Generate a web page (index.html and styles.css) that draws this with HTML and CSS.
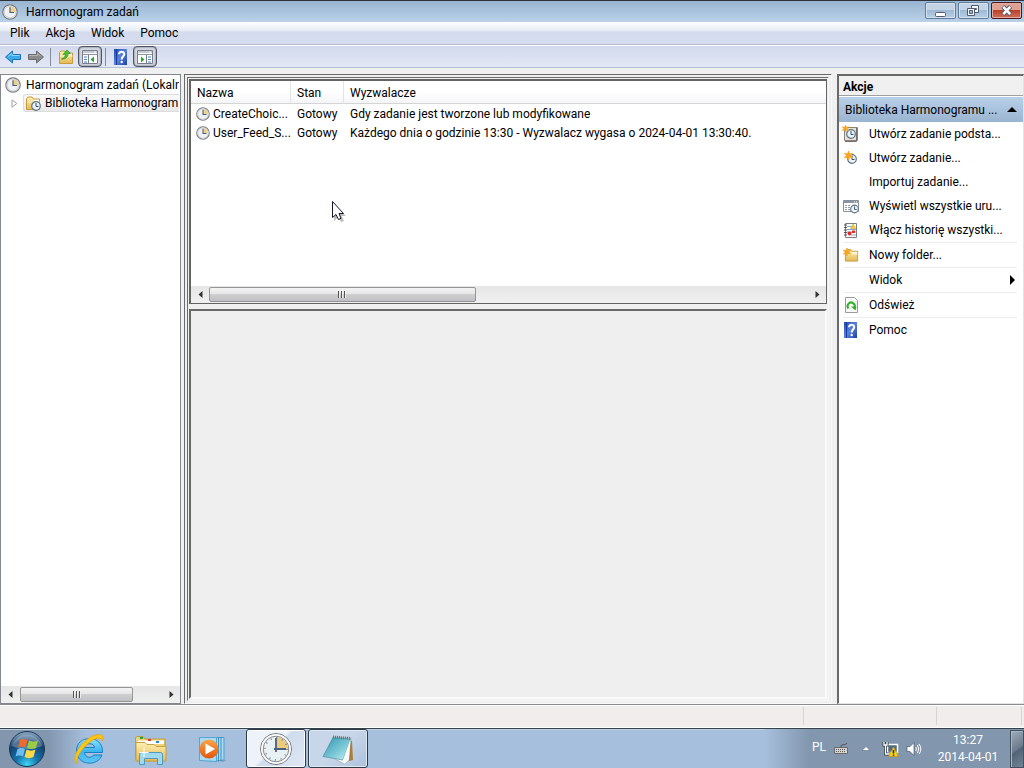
FILE: index.html
```html
<!DOCTYPE html>
<html lang="pl">
<head>
<meta charset="utf-8">
<title>Harmonogram zadań</title>
<link rel="stylesheet" href="styles.css">
</head>
<body>
<svg class="defs" aria-hidden="true">
  <defs>
    <linearGradient id="gold" x1="0" y1="0" x2="0" y2="1"><stop offset="0" stop-color="#fdf0b4"/><stop offset="1" stop-color="#e3b955"/></linearGradient>
    <linearGradient id="help-blue" x1="0" y1="0" x2="1" y2="1"><stop offset="0" stop-color="#1f49b5"/><stop offset=".5" stop-color="#5b83dc"/><stop offset="1" stop-color="#1b3fa6"/></linearGradient>
    <radialGradient id="orb" cx=".5" cy=".95" r=".9"><stop offset="0" stop-color="#3fd8f6"/><stop offset=".35" stop-color="#1576ae"/><stop offset=".75" stop-color="#16406c"/><stop offset="1" stop-color="#7d9dbb"/></radialGradient>
    <linearGradient id="ie" x1="0" y1="0" x2="0" y2="1"><stop offset="0" stop-color="#8fe3fb"/><stop offset=".5" stop-color="#3fb4ee"/><stop offset="1" stop-color="#5cc5f5"/></linearGradient>
    <linearGradient id="orange" x1="0" y1="0" x2="0" y2="1"><stop offset="0" stop-color="#fba54a"/><stop offset="1" stop-color="#e4560c"/></linearGradient>
    <linearGradient id="teal" x1="0" y1="0" x2="1" y2="1"><stop offset="0" stop-color="#2f93ae"/><stop offset=".6" stop-color="#7fcbd9"/><stop offset="1" stop-color="#d5f1f4"/></linearGradient>
    <symbol id="clock" viewBox="0 0 16 16">
      <circle cx="8" cy="8" r="7.2" fill="#eef2f6" stroke="#77797d" stroke-width="1.2"/>
      <circle cx="8" cy="8" r="5.9" fill="none" stroke="#cfcfcf" stroke-width="1"/>
      <path d="M8 8V2.6A5.4 5.4 0 0 1 13.4 8Z" fill="#f0cf86"/>
      <path d="M8 3.2V8.5H12" fill="none" stroke="#4a5d80" stroke-width="1.2"/>
    </symbol>
    <symbol id="mini-clock" viewBox="0 0 10 10">
      <circle cx="5" cy="5" r="4.300" fill="#eaf3fa" stroke="#5f7482" stroke-width="1.200"/>
      <path d="M5 2V5.500H7.500" fill="none" stroke="#33506e"/>
    </symbol>
    <symbol id="folder" viewBox="0 0 16 16">
      <path d="M1.500 14.500V3.500L3 2H7L8.500 4H14.500V14.500Z" fill="url(#gold)" stroke="#c79a3c"/>
      <path d="M8.500 5.500H14" stroke="#fff" stroke-width="1.500"/>
      <path d="M2 7H14.500" stroke="#fff3c4"/>
    </symbol>
    <symbol id="help" viewBox="0 0 16 16">
      <path d="M1 0H14V16H1Z" fill="url(#help-blue)"/>
      <path d="M3.500 0V16" stroke="#173a96"/>
      <path d="M6 5.300C6 1.900 11.500 1.900 11.200 5.400C11 7.500 8.700 7.700 8.700 10.400" fill="none" stroke="#fff" stroke-width="2"/>
      <circle cx="8.700" cy="13" r="1.200" fill="#fff"/>
    </symbol>
    <symbol id="star" viewBox="0 0 10 10"><path d="M5 0L6.200 3.300L9.700 2.500L7.300 5L9.700 7.800L6.200 6.900L5 10L3.800 6.900L.3 7.800L2.700 5L.3 2.500L3.800 3.300Z" fill="#f5a51f" stroke="#f5a51f" stroke-width=".8"/></symbol>
  </defs>
</svg>

<header class="titlebar">
  <svg class="icon16"><use href="#clock"/></svg>
  <h1>Harmonogram zadań</h1>
  <div class="window-buttons">
    <button type="button" aria-label="Minimalizuj"><svg width="30" height="17"><rect x="9.500" y="10.500" width="10" height="4" rx="1" fill="#fff" stroke="#535b70"/></svg></button>
    <button type="button" aria-label="Przywróć w dół"><svg width="30" height="17" fill="#f3f6fa" stroke="#535b70"><path d="M12.500 3.500H19.500V10.500H12.500Z"/><path d="M15.500 6.500H17.500V7.500H15.500Z"/><path d="M8.500 6.500H15.500V13.500H8.500Z"/><path d="M10.500 8.500H13.500V11.500H10.500Z" fill="#9eb7d2"/></svg></button>
    <button type="button" class="close" aria-label="Zamknij"><svg width="30" height="17"><path d="M11 4.500L18.500 12.500M18.500 4.500L11 12.500" stroke="#535b70" stroke-width="4.600"/><path d="M11.300 4.800L18.200 12.200M18.200 4.800L11.300 12.200" stroke="#fff" stroke-width="2.600"/></svg></button>
  </div>
</header>

<nav class="menubar">
  <button type="button">Plik</button>
  <button type="button">Akcja</button>
  <button type="button">Widok</button>
  <button type="button">Pomoc</button>
</nav>

<div class="toolbar">
  <button type="button" aria-label="Wstecz"><svg class="icon16"><path d="M.5 8L7.500 2V5.500H15.500V10.500H7.500V14Z" fill="#39a9ea" stroke="#1873b6"/><path d="M3 7.500L7 4.500V6.500H14.500" fill="none" stroke="#8fd8fa"/></svg></button>
  <button type="button" aria-label="Dalej"><svg class="icon16"><path d="M15.500 8L8.500 2V5.500H.5V10.500H8.500V14Z" fill="#8a8a8a" stroke="#6b6b6b"/><path d="M1.500 6.500H9.500V4.500L12.500 7" fill="none" stroke="#b5b5b5"/></svg></button>
  <span class="divider"></span>
  <button type="button" aria-label="W górę"><svg class="icon16"><use href="#folder"/><path d="M3.500 10C6 9.500 7.500 7.500 7.500 5L5 5.500L9 1L12.500 4.500L10 4.700C10 8 7.500 10.500 3.500 10Z" fill="#48c534" stroke="#268a1e" stroke-width=".7"/></svg></button>
  <button type="button" class="pressed" aria-label="Pokaż drzewo konsoli"><svg class="icon16"><path d="M.5 1.500H15.500V14.500H.5Z" fill="#fff" stroke="#777f8f"/><path d="M1 3H15M1 5.500H15" stroke="#8b93a3"/><path d="M12 3H14" stroke="#fff"/><path d="M6.500 6V14" stroke="#777f8f"/><path d="M2 8H5M2 10.500H5M2 13H5" stroke="#4d7fc0"/><path d="M12 7.500V13.500L8.500 10.500Z" fill="#27a52a"/></svg></button>
  <span class="divider"></span>
  <button type="button" aria-label="Pomoc"><svg class="icon16"><use href="#help"/></svg></button>
  <button type="button" class="pressed" aria-label="Pokaż okienko akcji"><svg class="icon16"><path d="M.5 1.500H15.500V14.500H.5Z" fill="#fff" stroke="#777f8f"/><path d="M1 3H15M1 5.500H15" stroke="#8b93a3"/><path d="M12 3H14" stroke="#fff"/><path d="M9.500 6V14" stroke="#777f8f"/><path d="M11 8H14M11 10.500H14M11 13H14" stroke="#4d7fc0"/><path d="M4 7.500V13.500L7.500 10.500Z" fill="#27a52a"/></svg></button>
</div>

<main class="workspace">
  <aside class="tree">
    <ul>
      <li><svg class="icon16"><use href="#clock"/></svg><span>Harmonogram zadań (Lokaln</span></li>
      <li class="child">
        <svg class="expander" width="7" height="9"><path d="M1 .8L5.800 4.500L1 8.200Z" fill="#fff" stroke="#a0a0a0"/></svg>
        <span class="selected"><svg class="icon16"><use href="#folder"/><use href="#mini-clock" x="6" y="6" width="10" height="10"/></svg><span>Biblioteka Harmonogram</span></span>
      </li>
    </ul>
    <div class="scrollbar tree-scroll">
      <button type="button" aria-label="Przewiń w lewo"><svg width="5" height="7"><path d="M4.500 0V7L.5 3.500Z" fill="#333"/></svg></button>
      <span class="thumb"><i></i><i></i><i></i></span><span class="track"></span>
      <button type="button" aria-label="Przewiń w prawo"><svg width="5" height="7"><path d="M.5 0V7L4.500 3.500Z" fill="#333"/></svg></button>
    </div>
  </aside>

  <div class="center">
    <section class="list">
      <table>
        <colgroup><col class="col-name"><col class="col-state"><col></colgroup>
        <thead><tr><th>Nazwa</th><th>Stan</th><th>Wyzwalacze</th></tr></thead>
        <tbody>
          <tr><td><span class="task"><svg class="icon14"><use href="#clock"/></svg>CreateChoic...</span></td><td>Gotowy</td><td>Gdy zadanie jest tworzone lub modyfikowane</td></tr>
          <tr><td><span class="task"><svg class="icon14"><use href="#clock"/></svg>User_Feed_S...</span></td><td>Gotowy</td><td>Każdego dnia o godzinie 13:30 - Wyzwalacz wygasa o 2024-04-01 13:30:40.</td></tr>
        </tbody>
      </table>
      <div class="scrollbar list-scroll">
        <button type="button" aria-label="Przewiń w lewo"><svg width="5" height="7"><path d="M4.500 0V7L.5 3.500Z" fill="#333"/></svg></button>
        <span class="thumb"><i></i><i></i><i></i></span><span class="track"></span>
        <button type="button" aria-label="Przewiń w prawo"><svg width="5" height="7"><path d="M.5 0V7L4.500 3.500Z" fill="#333"/></svg></button>
      </div>
      <svg class="cursor" width="16" height="22"><path d="M3 4V20L7 16.500L10 21L13 20L10.500 15H15Z" fill="#000" opacity=".25"/><path d="M1.500 .5V16.500L5 13.500L7.500 18.500L10 17.300L8 12.500H12.500Z" fill="#fff" stroke="#15152b"/></svg>
    </section>
    <section class="details"></section>
  </div>

  <aside class="actions">
    <h2>Akcje</h2>
    <button type="button" class="group"><span>Biblioteka Harmonogramu ...</span><svg width="10" height="5"><path d="M0 5L5 0L10 5Z"/></svg></button>
    <ul>
      <li><button type="button"><svg class="icon16"><path d="M1.500 1.500H14.500V14.500H1.500Z" fill="#e4e1dc" stroke="#8b8178"/><path d="M13.500 2V15.500H2" fill="none" stroke="#77706a"/><use href="#mini-clock" x="3" y="3" width="10" height="10"/><use href="#star" x="-1" y="-1" width="7" height="7"/></svg><span>Utwórz zadanie podsta...</span></button></li>
      <li><button type="button"><svg class="icon16"><use href="#mini-clock" x="4" y="4" width="10" height="10"/><use href="#star" x="1" y="1" width="9" height="9"/></svg><span>Utwórz zadanie...</span></button></li>
      <li><button type="button"><svg class="icon16"></svg><span>Importuj zadanie...</span></button></li>
      <li><button type="button"><svg class="icon16"><path d="M.5 2.500H15.500V13.500H.5Z" fill="#fff" stroke="#87909b"/><path d="M1 4H15" stroke="#8a95a5" stroke-width="2"/><path d="M11 4H15" stroke="#fff" stroke-dasharray="1 1"/><path d="M2 7.500H8M2 9.500H7M2 11.500H7" stroke="#8c9cad" stroke-dasharray="2 1"/><use href="#mini-clock" x="7" y="6" width="9" height="10"/></svg><span>Wyświetl wszystkie uru...</span></button></li>
      <li><button type="button"><svg class="icon16"><path d="M2.500 1.500H13.500V15.500H2.500Z" fill="#fff" stroke="#7d7d7d"/><path d="M4 4.500H9M4 7.500H13M4 10H13M8 13H13" stroke="#86a7cd"/><path d="M1 3H4M1 5.500H4M1 8H4M1 10.500H4M1 13H4" stroke="#555"/><path d="M7.500 6.500L10 2L12.500 6.500Z" fill="#f3ce2e" stroke="#c29b16" stroke-width=".5"/><circle cx="6.500" cy="11.500" r="2" fill="#d9302c"/><path d="M9 8.500H12V11H9Z" fill="#d9302c"/></svg><span>Włącz historię wszystki...</span></button></li>
      <li class="split"><button type="button"><svg class="icon16"><use href="#folder" x="1" width="15" height="16"/><use href="#star" y="1" width="8" height="8"/></svg><span>Nowy folder...</span></button></li>
      <li class="split"><button type="button"><svg class="icon16"></svg><span>Widok</span><svg class="submenu" width="5" height="10"><path d="M0 0L5 5L0 10Z"/></svg></button></li>
      <li class="split"><button type="button"><svg class="icon16"><path d="M2.500 .5H11.500L14.500 3.500V15.500H2.500Z" fill="#fafafa" stroke="#9a9a9a"/><path d="M5.500 11.500A3.600 3.600 0 1 1 11.500 10.500" fill="none" stroke="#2fae2b" stroke-width="2"/><path d="M8 9.500L13.500 9.800L12.500 13.500Z" fill="#2fae2b"/></svg><span>Odśwież</span></button></li>
      <li class="split"><button type="button"><svg class="icon16"><use href="#help"/></svg><span>Pomoc</span></button></li>
    </ul>
  </aside>
</main>

<footer class="statusbar"><span></span><span class="part-mid"></span><span class="part-end"></span></footer>

<div class="taskbar">
  <button type="button" class="start" aria-label="Start"><svg width="38" height="38">
    <circle cx="19" cy="19" r="17.500" fill="url(#orb)" stroke="#173653"/>
    <path d="M4 16A15.500 15.500 0 0 1 34 16C26 20 12 20 4 16Z" fill="#fff" opacity=".25"/>
    <path d="M12 10C14 8.500 17 8.500 19.500 10L17.500 17.500C15 16.200 12.500 16.200 10 17.500Z" fill="#ee6a2c"/>
    <path d="M21 10.500C24 12 27 12 30 10.500L28 18C25 19.300 22 19.300 19 18Z" fill="#9ccc45"/>
    <path d="M9.500 19C12 17.700 14.500 17.700 17 19L15 26.500C12.500 25.200 10 25.200 7.500 26.500Z" fill="#6fbcf0"/>
    <path d="M18.500 19.500C21.500 21 24.500 21 27.500 19.500L25.500 27C22.500 28.500 19.500 28.500 16.500 27Z" fill="#fbd648"/>
  </svg></button>
  <button type="button" class="pin" aria-label="Internet Explorer"><svg width="32" height="32">
    <path fill-rule="evenodd" d="M29.500 19.500H11.500C12 25 19 25.500 20.500 22H29C25 34 3.500 33 3.500 17.500C3.500 1.500 30.500 1 29.500 19.500ZM11.500 14.500H21.500C21 9.500 12 9.500 11.500 14.500Z" fill="url(#ie)" stroke="#1b7fc4"/>
    <path d="M4 30.500C-2 27 5 13 14 6.500C21 1 29 0 30 4C30.300 6 30 7 29.500 8C28.500 4.500 25 4.500 21 6.500C13 10.500 1.500 24 4 30.500Z" fill="#fbc51d" stroke="#e0a400" stroke-width=".7"/>
  </svg></button>
  <button type="button" class="pin" aria-label="Eksplorator Windows"><svg width="34" height="32">
    <path d="M1.500 26V5L3 3.500H9L11 6H31V28H3Z" fill="#efd27a" stroke="#bf9a3b"/>
    <path d="M4 7.500H30V11H4Z" fill="#fff"/><path d="M6 4H9V6H6Z" fill="#20a63a"/><path d="M14 6H17V8H14Z" fill="#d4402c"/><path d="M22 8H25V10H22Z" fill="#2584d4"/>
    <path d="M2 9.500H11L13 11.500H20L22 13.500H32V28H2Z" fill="url(#gold)" stroke="#c9a23f"/>
    <path d="M5.500 31.500V21.500Q5.500 19.500 7.500 19.500H26.500Q28.500 19.500 28.500 21.500V31.500H23.500V25.500H10.500V31.500Z" fill="#9fd9ee" stroke="#5598bb"/>
    <path d="M10 15V24M5.500 19.500H14.500" stroke="#fff"/>
  </svg></button>
  <button type="button" class="pin" aria-label="Windows Media Player"><svg width="32" height="32">
    <path d="M22 27H30L25 29Z" fill="#52789f" opacity=".5"/>
    <path d="M13 4.500H27V27L13 28.500Z" fill="#a9daf3" stroke="#4d9dcc"/><path d="M24 4V28M21.500 4V28.500" stroke="#3d8fc0"/>
    <path d="M2.500 4.500H19.500V28.500L2.500 27.500Z" fill="#a7daf4" stroke="#57a4cf"/>
    <circle cx="12" cy="16" r="9.500" fill="url(#orange)"/><path d="M8.500 10.500V21.500L18 16Z" fill="#fff"/>
  </svg></button>
  <button type="button" class="window active" aria-label="Harmonogram zadań"><svg width="34" height="34">
    <circle cx="17" cy="17" r="15.500" fill="#eaf1f5" stroke="#74777c"/><circle cx="17" cy="17" r="13.800" fill="none" stroke="#fff" stroke-width="2"/><circle cx="17" cy="17" r="12.800" fill="none" stroke="#858a92"/>
    <path d="M17 17V5A12 12 0 0 1 29 17Z" fill="#ebcb7c"/><circle cx="17" cy="17" r="11" fill="none" stroke="#62738c" stroke-width="1.500" stroke-dasharray="1 4.760"/>
    <path d="M17 6V20M15 17H27" stroke="#49617f" stroke-width="1.800"/>
  </svg></button>
  <button type="button" class="window" aria-label="Notatnik"><svg width="34" height="34">
    <path d="M26 7L31 9L32 28L24 30Z" fill="#a77f3a"/><path d="M12 5L30 6L27 29L23 32L14 27Z" fill="#f3f5f4" stroke="#9aa5a5" stroke-width=".7"/>
    <path d="M12 5.500L29.500 7L22 28L2 24.500Z" fill="url(#teal)" stroke="#3e8595" stroke-width=".6"/><path d="M22 28L29.500 7L28 28L23 32Z" fill="#f7fafa"/>
    <path d="M12 5L30 6.500" stroke="#6e7679" stroke-width="3" stroke-dasharray="1 1"/>
  </svg></button>
  <div class="tray">
    <span class="lang">PL</span>
    <svg class="keyboard" width="16" height="16"><path d="M1.500 6.500H14.500V12.500H1.500Z" fill="#d5d1cb" stroke="#6a6a6a"/><path d="M8 6C8 2 12 5 14 2" fill="none" stroke="#514f4d"/><path d="M3 8.500H13M3 10.500H13" stroke="#5d5e60" stroke-dasharray="1 1"/></svg>
    <svg class="more" width="8" height="5"><path d="M0 4.500L4 .5L8 4.500Z" fill="#fff" stroke="#48586a" stroke-width=".5"/></svg>
    <svg class="network" width="17" height="16"><path d="M5.500 3.500H15.500V11.500H5.500Z" fill="#52697e" stroke="#fff" stroke-width="1.500"/><path d="M2 1V4H5V1M3.500 4V13H8" fill="none" stroke="#35424e" stroke-width="3"/><path d="M2 1V4H5V1M3.500 4V13H8" fill="none" stroke="#fff" stroke-width="1.300"/><path d="M6.500 15.500L11.500 6L16.500 15.500Z" fill="#f8d51c" stroke="#c38f0b" stroke-width=".7"/><path d="M11.500 9V12.500M11.500 13.500V14.700" stroke="#222" stroke-width="1.500"/></svg>
    <svg class="volume" width="16" height="16"><path d="M1 5.500H4L8 1.500V14.500L4 10.500H1Z" fill="#fff" stroke="#4b5a69" stroke-width=".7"/><path d="M9.800 6Q11 8 9.800 10M11.500 4Q14 8 11.500 12M13.200 3Q16.500 8 13.200 13" fill="none" stroke="#fff"/></svg>
    <time class="clock" datetime="2014-04-01T13:27"><span>13:27</span><span>2014-04-01</span></time>
    <button type="button" class="show-desktop" aria-label="Pokaż pulpit"></button>
  </div>
</div>
</body>
</html>
```
FILE: styles.css
```css
* { box-sizing: border-box; }

body {
  margin: 0;
  min-height: 100vh;
  display: flex;
  flex-direction: column;
  background: #f0f0f0;
  color: #000;
  font: 12px/18px Roboto, "Open Sans", sans-serif;
  white-space: nowrap;
}

button {
  margin: 0;
  padding: 0;
  border: 0;
  background: none;
  color: inherit;
  font: inherit;
}

svg { display: block; flex: none; }
ul { margin: 0; padding: 0; list-style: none; }
.defs { position: absolute; width: 0; height: 0; }
.icon16 { width: 16px; height: 16px; overflow: visible; }
.icon14 { width: 14px; height: 14px; }

.titlebar {
  display: flex;
  align-items: center;
  gap: 8px;
  height: 22px;
  padding: 0 2px;
  border-top: 1px solid #2d3339;
  background: linear-gradient(#9ab5d2, #bad1e8);
}
.titlebar h1 { flex: 1; margin: 0; font-size: 12px; line-height: 18px; font-weight: 400; }
.window-buttons { display: flex; gap: 2px; align-self: flex-start; padding-top: 1px; }
.window-buttons button {
  width: 31px;
  height: 17px;
  border: 1px solid #5f7c9c;
  border-radius: 2px;
  background: linear-gradient(#c2d4e6 45%, #9fb9d3 50%, #b9d0e6);
  box-shadow: inset 0 0 0 1px #d5e2ee;
}
.window-buttons svg { margin-top: -1px; }
.window-buttons .close {
  border-color: #4b1820;
  background: linear-gradient(#dfa191 45%, #bb4229 50%, #d0705a);
  box-shadow: inset 0 0 0 1px #e3aba0;
}

.menubar {
  display: flex;
  gap: 16px;
  height: 23px;
  padding: 0 10px;
  border-bottom: 1px solid #b6bccc;
  background: linear-gradient(#fff, #e6ebf6 40%, #d4dbed 45%, #d6dcef);
}
.toolbar {
  display: flex;
  align-items: center;
  gap: 6px;
  height: 23px;
  padding: 0 5px;
  border-top: 1px solid #fff;
  border-bottom: 1px solid #b5bfd6;
  background: linear-gradient(#d2d9ec, #e2e8f6);
}
.toolbar button + button { margin-left: 1px; }
.toolbar .divider { width: 1px; height: 18px; background: #858b98; }
.toolbar .divider + button { margin-left: 1px; }
.toolbar .pressed {
  display: grid;
  place-items: center;
  width: 24px;
  height: 21px;
  margin: 0 -3px;
  border: 1px solid #505663;
  border-radius: 4px;
  background: #d3d8e2;
  box-shadow: inset 0 0 2px #505663;
}
.toolbar button + .pressed { margin-left: -2px; }

.workspace { flex: 1; display: flex; padding-top: 6px; min-height: 0; }

.tree {
  display: flex;
  flex-direction: column;
  width: 181px;
  border: 1px solid #828790;
  background: #fff;
  overflow: hidden;
}
.tree ul { flex: 1; padding: 1px 1px 0 4px; overflow: hidden; }
.tree li { display: flex; align-items: center; gap: 5px; height: 18px; overflow: hidden; }
.tree .child { padding-left: 6px; }
.tree .selected {
  display: flex;
  flex: 1;
  align-items: center;
  gap: 4px;
  height: 18px;
  padding-left: 1px;
  border: 1px solid #dcdcdc;
  border-right: 0;
  border-radius: 3px 0 0 3px;
  background: linear-gradient(#fafafa, #e8e8e8);
}

.scrollbar { display: flex; height: 17px; background: linear-gradient(#e6e6e6, #f0f0f0); }
.scrollbar button { display: grid; place-items: center; width: 18px; }
.scrollbar .track { flex: 1; }
.thumb {
  display: flex;
  justify-content: center;
  align-items: center;
  gap: 1px;
  height: 15px;
  margin-top: 1px;
  border: 1px solid #959595;
  border-radius: 2px;
  background: linear-gradient(#f4f4f4, #e6e6e6 45%, #cfcfd1 50%, #c0c0c4);
}
.thumb i { width: 2px; height: 7px; border-left: 1px solid #555; background: #eee; }
.tree-scroll .thumb { width: 113px; margin-left: 1px; }
.list-scroll .thumb { width: 42%; }

.center {
  flex: 1;
  display: flex;
  flex-direction: column;
  gap: 5px;
  min-width: 0;
  margin: 0 5px 0 3px;
  padding: 1px;
  border: 4px double #6b6b6b;
  border-right-color: #f8f8f8;
  border-bottom-color: #f8f8f8;
  background: #efefef;
}
.list {
  position: relative;
  display: flex;
  flex-direction: column;
  justify-content: space-between;
  height: 225px;
  border: 1px solid #646464;
  border-width: 2px 1px 1px 2px;
  background: #fff;
}
.cursor { position: absolute; left: 140px; top: 120px; }
.details { flex: 1; border: 2px solid #fafafa; border-top-color: #696969; border-left-color: #696969; }

table { width: 100%; table-layout: fixed; border-collapse: separate; border-spacing: 0; }
.col-name { width: 100px; }
.col-state { width: 53px; }
th { height: 23px; padding: 1px 6px 0; border-right: 1px solid #e2e3e8; border-bottom: 1px solid #d5d5d5; background: linear-gradient(#fff 50%, #f4f5f7); font-weight: 400; text-align: left; }
th:last-child { border-right: 0; }
td { height: 19px; padding: 0 0 0 6px; }
td:first-child { padding-left: 5px; }
.task { display: flex; align-items: center; gap: 3px; }

.actions {
  display: flex;
  flex-direction: column;
  width: 187px;
  border: 1px solid #e3e3e3;
  border-top: 2px solid #696969;
  border-left: 2px solid #696969;
  background: #fff;
}
.actions h2 { margin: 0; padding: 2px 4px 0; height: 20px; border-bottom: 1px solid #a0a0a0; background: #f0f0f0; font-size: 12px; line-height: 18px; }
.actions .group { display: flex; align-items: center; justify-content: space-between; height: 25px; margin-top: 1px; padding: 0 6px; background: linear-gradient(#b9d0e8, #9ab4d1); }
.actions li { margin: 0 6px 0 4px; }
.actions .split { border-top: 1px solid #ececec; }
.actions li button { display: flex; align-items: center; gap: 10px; width: 100%; height: 24px; text-align: left; }
.actions .submenu { margin-left: auto; margin-right: 2px; }

.statusbar { display: flex; height: 24px; padding: 2px; border-top: 1px solid #8c8c8c; border-bottom: 1px solid #fff; background: #f0edec; box-shadow: inset 0 1px #fff; }
.statusbar span { flex: 1; border-right: 1px solid #d6d4d3; }
.statusbar .part-mid { flex: none; width: 133px; }
.statusbar .part-end { flex: none; width: 85px; }

.taskbar {
  display: flex;
  align-items: center;
  height: 40px;
  border-top: 1px solid #35424e;
  background: linear-gradient(90deg, #8296ae, #8296ae 48px, #a6bfdd 86px);
  box-shadow: inset 0 1px #bfd0e3;
}
.taskbar .start { margin-left: 8px; margin-right: 27px; }
.taskbar .pin { margin-right: 29px; }
.taskbar .pin + .pin + .pin { margin-right: 17px; }
.taskbar .window {
  display: grid;
  place-items: center;
  width: 60px;
  height: 39px;
  margin-right: 2px;
  border: 1px solid #2d3946;
  border-radius: 3px;
  background: linear-gradient(135deg, #c8d6e9 50%, #adc1dc);
  box-shadow: inset 0 0 0 1px #dfe9f4;
}
.taskbar .active { background: linear-gradient(135deg, #eef3f9 45%, #cfdced 50%, #e0e8f3); box-shadow: inset 0 0 0 1px #fff; }

.tray { display: flex; align-items: center; height: 39px; margin-left: auto; padding-left: 47px; background: linear-gradient(90deg, #a6bfdd, #8296ad 45px); color: #fff; }
.lang { width: 21px; line-height: 18px; padding-bottom: 4px; }
.keyboard { margin-right: 13px; }
.more { margin-right: 12px; }
.network { margin-right: 7px; }
.clock { display: flex; flex-direction: column; width: 88px; padding-right: 2px; line-height: 17px; text-align: center; padding-left: 6px; }
.show-desktop { width: 14px; height: 38px; border: 1px solid #43515f; background: linear-gradient(145deg, #a0acb9, #6b7c8e 50%, #526377 55%, #718396); box-shadow: inset 1px 1px #aab5c1; }
```
